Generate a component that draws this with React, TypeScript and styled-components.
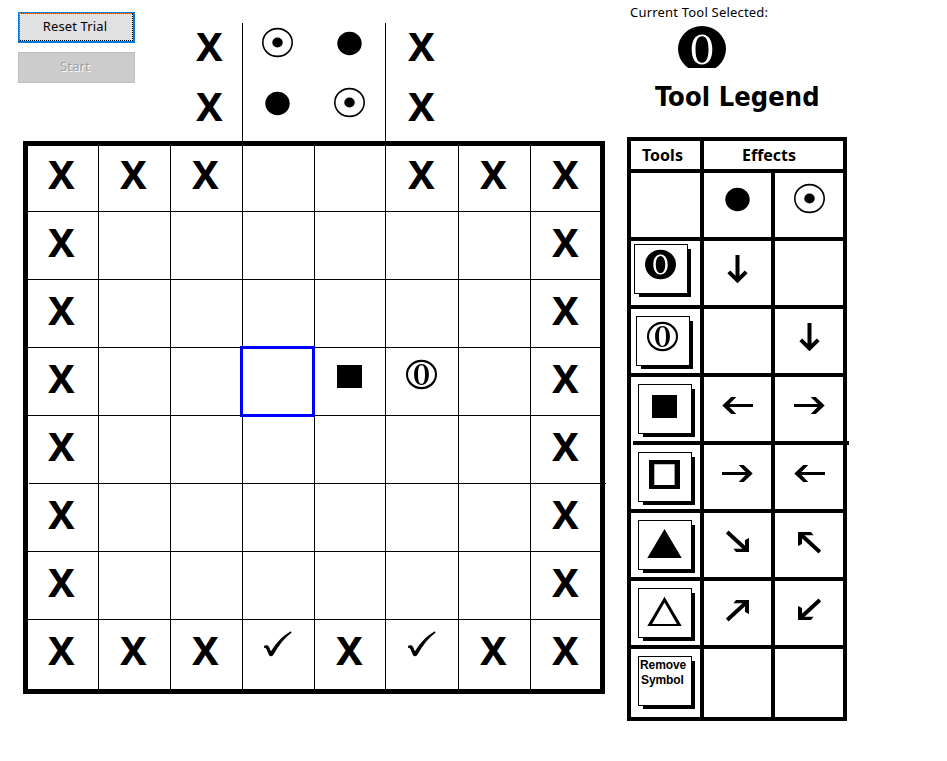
import React from "react";
import styled, { createGlobalStyle, css } from "styled-components";

const GlobalStyle = createGlobalStyle`
  *, *::before, *::after { box-sizing: border-box; }
  body { margin: 0; background: #fff; color: #000; }
`;

const uiFont = '"Noto Sans", "Open Sans", sans-serif';

type Kind =
  | "x" | "disc" | "sun" | "square" | "openSquare" | "zero" | "openZero"
  | "triangle" | "openTriangle" | "check"
  | "down" | "left" | "right" | "se" | "nw" | "ne" | "sw";

/* ---------- layout ---------- */

const Screen = styled.main`
  width: 947px;
  height: 761px;
  display: flex;
  align-items: flex-start;
  overflow: hidden;
  background: #fff;
  font-family: ${uiFont};
`;

const TrialPane = styled.section`
  width: 627px;
  display: flex;
  flex-direction: column;
`;

const TopBar = styled.header`
  height: 141px;
  display: flex;
  padding-left: 18px;
`;

const Actions = styled.div`
  width: 153px;
  padding-top: 12px;
  display: flex;
  flex-direction: column;
  gap: 9px;
`;

const ActionButton = styled.button`
  position: relative;
  width: 117px;
  height: 31px;
  padding: 0 3px 3px 0;
  border: 2px solid #0078d7;
  background: #e1e1e1;
  color: #000;
  font: 13px/20px ${uiFont};
  letter-spacing: 0.15px;

  &:disabled {
    border: 1px solid #bfbfbf;
    background: #ccc;
    color: #a0a0a0;
    text-shadow: 1px 1px 0 #fff;
  }
`;

const FocusRing = styled.span`
  position: absolute;
  inset: -1px 0 0 -1px;
  border: 1px dotted #000;
  border-top-color: #ff8728;
  border-left-color: #ff8728;
`;

/* ---------- symbols ---------- */

const Slot = styled.div<{ $dx?: number; $dy?: number }>`
  width: 69px;
  height: 56px;
  margin-left: ${(p) => p.$dx ?? 0}px;
  margin-top: ${(p) => p.$dy ?? 0}px;
`;

const Cross = styled.span`
  display: block;
  width: 69px;
  text-align: center;
  font: 700 40px/59px "Noto Sans", sans-serif;
`;

const Drawing = styled.svg`
  display: block;
  overflow: visible;
`;

/* Shapes are drawn around (0, 0) */
const shapes: Partial<Record<Kind, React.ReactNode>> = {
  disc: <ellipse rx="12.2" ry="11.7" />,
  sun: (
    <>
      <ellipse rx="14.7" ry="13.9" fill="none" stroke="#000" strokeWidth="1.6" />
      <ellipse rx="5.2" ry="5" />
    </>
  ),
  square: <rect x="-12.5" y="-11.5" width="25" height="23" />,
  openSquare: <path fillRule="evenodd" d="M-15.5-14.5h31v29h-31zM-10.2-10.2v20.7h20.3v-20.7z" />,
  zero: (
    <>
      <ellipse rx="15.5" ry="14.7" />
      <path
        fill="#fff"
        fillRule="evenodd"
        d="M0-10C4.800-10 7.200-5.500 7.200 0S4.800 10 0 10-7.200 5.500-7.200 0-4.800-10 0-10zM0-8.600C-3-8.600-4.700-5-4.700 0S-3 8.600 0 8.600 4.700 5 4.700 0 3-8.600 0-8.600z"
      />
    </>
  ),
  openZero: (
    <>
      <ellipse rx="14.5" ry="13.6" fill="none" stroke="#000" strokeWidth="2.1" />
      <path fillRule="evenodd" d="M0-10.5C4.8-10.5 7.4-6 7.4 0S4.8 10.5 0 10.5-7.4 6-7.4 0-4.8-10.5 0-10.5zM0-9.3C-2.5-9.3-3.5-6-3.5 0S-2.5 9.3 0 9.3 3.5 6 3.5 0 2.5-9.3 0-9.3z" />
    </>
  ),
  triangle: <path d="M0-14.5L17.2 14.5H-17.2z" />,
  openTriangle: <path fillRule="evenodd" d="M0-14.8L17.2 14.5H-17.2zM0-9L-12.400 12.5H12.4z" />,
  check: <path d="M-13.500 1.600c2-1.400 4.300-1.100 5.200 1.200L-6.600 6.800C-1-2 5.500-9.200 13.500-13.300l.5 1.500C6.800-6.500 1 1-3.800 9.800c-.9 2.100-3.800 2.600-4.700.6L-11.300 4.300c-.5-1-1.300-1.100-2.200-.9z" />,
  down: <path d="M0-14V12M-8.700 2.800L0 11.500 8.700 2.800" fill="none" stroke="#000" strokeWidth="4" />,
  right: (
    <>
      <path d="M-15.500 0H13" fill="none" stroke="#000" strokeWidth="3" />
      <path d="M1.200-8.500H6.200L15.200 0 6.200 8.500H1.200L9.500 0z" />
    </>
  ),
  se: (
    <>
      <path d="M-10.300-9.500L9.500 8.800" fill="none" stroke="#000" strokeWidth="3.900" />
      <path d="M7.500-1.500L11.500-3.500V10.500H-1.500L-4 7.300H7.500z" />
    </>
  ),
};

const drawn: Partial<Record<Kind, { shape: Kind; cy: number; flip?: string }>> = {
  disc: { shape: "disc", cy: 27.5 },
  sun: { shape: "sun", cy: 26.5 },
  square: { shape: "square", cy: 28.5 },
  zero: { shape: "zero", cy: 26.5 },
  openZero: { shape: "openZero", cy: 26.5 },
  check: { shape: "check", cy: 24.5 },
  down: { shape: "down", cy: 29 },
  right: { shape: "right", cy: 29.5 },
  left: { shape: "right", cy: 29.5, flip: "scale(-1 1)" },
  se: { shape: "se", cy: 29.5 },
  nw: { shape: "se", cy: 30.5, flip: "scale(-1 -1)" },
  ne: { shape: "se", cy: 30.5, flip: "scale(1 -1)" },
  sw: { shape: "se", cy: 29.5, flip: "scale(-1 1)" },
};

function Glyph({ kind, dx, dy }: { kind: Kind; dx?: number; dy?: number }) {
  const d = drawn[kind];
  return (
    <Slot $dx={dx} $dy={dy}>
      {kind === "x" || !d ? (
        <Cross>X</Cross>
      ) : (
        <Drawing width="69" height="56">
          <g transform={`translate(34.500 ${d.cy}) ${d.flip ?? ""}`}>{shapes[d.shape]}</g>
        </Drawing>
      )}
    </Slot>
  );
}

/* ---------- incoming queue ---------- */

const Queue = styled.div`
  display: grid;
  grid-template-columns: 71px 72px 72px 72px;
  grid-template-rows: 60px 58px;
  margin-top: 23px;
`;

const QueueCell = styled.div<{ $edge?: "left" | "right" }>`
  height: 100%;
  min-width: 0;
  min-height: 0;
  display: flex;
  align-items: flex-start;
  ${(p) => p.$edge && css`border-${p.$edge}: 1px solid #000;`}
`;

const queue: Kind[][] = [
  ["x", "sun", "disc", "x"],
  ["x", "disc", "sun", "x"],
];
const queueEdges = [undefined, "left", "right", undefined] as const;
const queueShift = [4, 0, 1, 1];

/* ---------- board ---------- */

const Board = styled.div`
  width: 582px;
  height: 553px;
  margin-left: 23px;
  border: 5px solid #000;
  display: grid;
  grid-template-columns: 71px 72px 72px 72px 71px 73px 72px 69px;
  grid-template-rows: 66px repeat(6, 68px) 69px;
`;

const BoardCell = styled.div<{ $lastCol: boolean; $lastRow: boolean }>`
  position: relative;
  min-width: 0;
  min-height: 0;
  display: flex;
  align-items: flex-start;
  border-right: ${(p) => (p.$lastCol ? 0 : 1)}px solid #000;
  border-bottom: ${(p) => (p.$lastRow ? 0 : 1)}px solid #000;
`;

const Selection = styled.span`
  position: absolute;
  z-index: 2;
  left: -3px;
  top: -2px;
  width: 75px;
  height: 71px;
  border: 3px solid #00f;
`;

const LineTip = styled.span<{ $x: number; $y: number; $w: number; $h: number; $light?: boolean }>`
  position: absolute;
  left: ${(p) => p.$x}px;
  top: ${(p) => p.$y}px;
  width: ${(p) => p.$w}px;
  height: ${(p) => p.$h}px;
  background: ${(p) => (p.$light ? "#fff" : "#000")};
`;

const board = [
  "XXX..XXX",
  "X......X",
  "X......X",
  "X...SO.X",
  "X......X",
  "X......X",
  "X......X",
  "XXXVXVXX",
];
const boardKinds: Record<string, Kind> = { X: "x", S: "square", O: "openZero", V: "check" };
const columnShift = [-1, 0, 0, 0, 0, 1, 0, 0];

/* ---------- legend ---------- */

const LegendPane = styled.aside`
  width: 220px;
  display: flex;
  flex-direction: column;
`;

const Caption = styled.div`
  height: 26px;
  padding: 2px 0 0 3px;
  font: 13px/20px ${uiFont};
  letter-spacing: 0.2px;
  white-space: nowrap;
`;

const CurrentTool = styled.div`
  width: 48px;
  height: 42px;
  margin-left: 51px;
  overflow: hidden;
`;

const Title = styled.h1`
  height: 69px;
  margin: 0;
  padding: 9px 0 0 28px;
  font: 700 27px/40px "DejaVu Sans Condensed", "DejaVu Sans", sans-serif;
  letter-spacing: 0.1px;
  white-space: nowrap;
`;

const LegendTable = styled.div`
  width: 220px;
  height: 584px;
  border: 4px solid #000;
  display: grid;
  grid-template-columns: 73px 71px 68px;
  grid-template-rows: 32px repeat(7, 68px) 68px;
`;

const LegendCell = styled.div<{ $edge?: boolean; $last?: boolean; $wide?: boolean }>`
  position: relative;
  min-width: 0;
  min-height: 0;
  display: flex;
  align-items: flex-start;
  ${(p) => p.$wide && css`grid-column: span 2;`}
  border-right: ${(p) => (p.$edge ? 4 : 0)}px solid #000;
  border-bottom: ${(p) => (p.$last ? 0 : 4)}px solid #000;
`;

const HeadText = styled.span<{ $left: number }>`
  padding-left: ${(p) => p.$left}px;
  font: 700 16px/28px ${uiFont};
  letter-spacing: 0;
`;

const ToolButton = styled.button<{ $dx: number; $dy: number }>`
  width: 54px;
  height: 50px;
  margin: ${(p) => p.$dy}px 0 0 ${(p) => p.$dx}px;
  padding: 0;
  border: 1px solid #000;
  background: #fff;
  color: #000;
  box-shadow: 4px 4px 0 -1px #000;
  display: flex;
  align-items: flex-start;
  text-align: left;
`;

const RemoveText = styled.span`
  display: flex;
  flex-direction: column;
  padding: 1px 0 0 1px;
  font: 700 12px/15px "Liberation Sans", Arial, sans-serif;
  letter-spacing: -0.1px;
`;

const Indented = styled.span`
  padding-left: 1px;
`;

interface LegendRow {
  tool?: Kind;
  cy?: number;
  dx?: number;
  dy?: number;
  remove?: boolean;
  effects: (Kind | null)[];
}

const legend: LegendRow[] = [
  { effects: ["disc", "sun"] },
  { tool: "zero", cy: 19.5, dx: 3, dy: 3, effects: ["down", null] },
  { tool: "openZero", cy: 19.5, dx: 5, dy: 7, effects: [null, "down"] },
  { tool: "square", cy: 21.5, dx: 7, dy: 7, effects: ["left", "right"] },
  { tool: "openSquare", cy: 21.5, dx: 7, dy: 7, effects: ["right", "left"] },
  { tool: "triangle", cy: 22.5, dx: 7, dy: 7, effects: ["se", "nw"] },
  { tool: "openTriangle", cy: 22.5, dx: 7, dy: 7, effects: ["ne", "sw"] },
  { remove: true, dx: 7, dy: 7, effects: [null, null] },
];

export default function App() {
  return (
    <>
      <GlobalStyle />
      <Screen>
        <TrialPane>
          <TopBar>
            <Actions>
              <ActionButton>
                Reset Trial
                <FocusRing />
              </ActionButton>
              <ActionButton disabled>Start</ActionButton>
            </Actions>
            <Queue>
              {queue.flatMap((row, r) =>
                row.map((kind, c) => (
                  <QueueCell key={`${r}-${c}`} $edge={queueEdges[c]}>
                    <Glyph kind={kind} dx={queueShift[c]} dy={-7} />
                  </QueueCell>
                ))
              )}
            </Queue>
          </TopBar>
          <Board>
            {board.flatMap((row, r) =>
              [...row].map((mark, c) => (
                <BoardCell key={`${r}-${c}`} $lastCol={c === 7} $lastRow={r === 7}>
                  {boardKinds[mark] && (
                    <Glyph kind={boardKinds[mark]} dx={columnShift[c]} dy={r === 0 ? -2 : 0} />
                  )}
                  {r === 3 && c === 3 && <Selection />}
                  {r === 4 && c === 0 && <LineTip $x={0} $y={67} $w={1} $h={1} $light />}
                  {r === 4 && c === 7 && <LineTip $x={69} $y={67} $w={6} $h={1} />}
                </BoardCell>
              ))
            )}
          </Board>
        </TrialPane>

        <LegendPane>
          <Caption>Current Tool Selected:</Caption>
          <CurrentTool>
            <Drawing width="48" height="46">
              <ellipse cx="24" cy="23" rx="24" ry="23" />
              <path
                fill="#fff"
                fillRule="evenodd"
                d="M24 8.500C31 8.500 34.300 15 34.300 23.500S31 38.500 24 38.500 13.700 32 13.700 23.500 17 8.500 24 8.500zM24 10.300C19.500 10.300 17.500 15.500 17.500 23.500S19.500 36.700 24 36.700 30.500 31.500 30.500 23.500 28.500 10.300 24 10.300z"
              />
            </Drawing>
          </CurrentTool>
          <Title>Tool Legend</Title>
          <LegendTable>
            <LegendCell $edge>
              <HeadText $left={11}>Tools</HeadText>
            </LegendCell>
            <LegendCell $wide>
              <HeadText $left={38}>Effects</HeadText>
            </LegendCell>
            {legend.map((row, r) => {
              const last = r === legend.length - 1;
              return (
                <React.Fragment key={r}>
                  <LegendCell $edge $last={last}>
                    {(row.tool || row.remove) && (
                      <ToolButton $dx={row.dx ?? 0} $dy={row.dy ?? 0}>
                        {row.tool ? (
                          <Drawing width="52" height="48">
                            <g transform={`translate(25.500 ${row.cy})`}>{shapes[row.tool]}</g>
                          </Drawing>
                        ) : (
                          <RemoveText>
                            <span>Remove</span>
                            <Indented>Symbol</Indented>
                          </RemoveText>
                        )}
                      </ToolButton>
                    )}
                    {r === 3 && <LineTip $x={0} $y={64} $w={2} $h={4} $light />}
                  </LegendCell>
                  <LegendCell $edge $last={last}>
                    {row.effects[0] && <Glyph kind={row.effects[0]} dx={-1} dy={-1} />}
                  </LegendCell>
                  <LegendCell $last={last}>
                    {row.effects[1] && <Glyph kind={row.effects[1]} dx={0} dy={-1} />}
                    {r === 3 && <LineTip $x={72} $y={64} $w={2} $h={4} />}
                  </LegendCell>
                </React.Fragment>
              );
            })}
          </LegendTable>
        </LegendPane>
      </Screen>
    </>
  );
}
